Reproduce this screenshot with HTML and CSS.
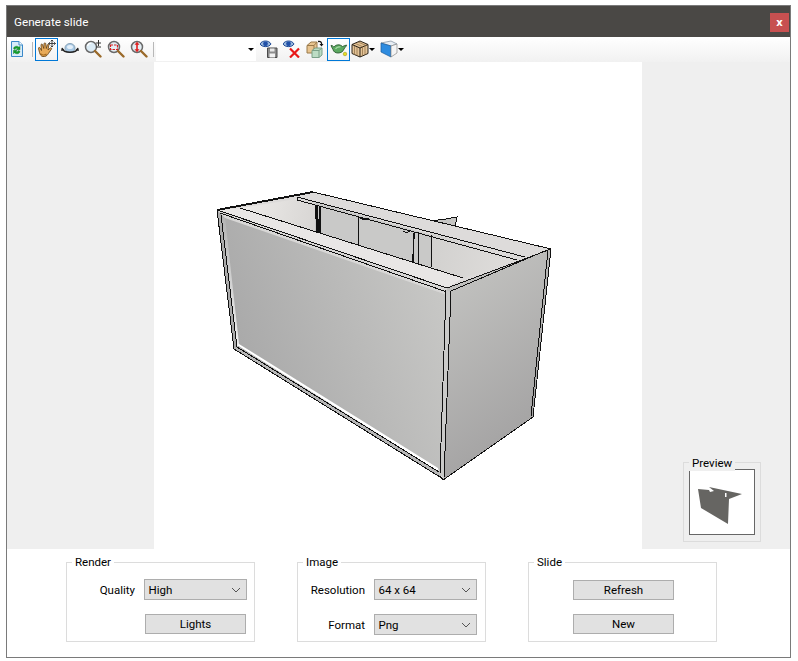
FILE: index.html
```html
<!DOCTYPE html>
<html lang="en">
<head>
<meta charset="utf-8">
<title>Generate slide</title>
<link rel="stylesheet" href="styles.css">
</head>
<body>
<div class="window">
  <header class="titlebar">
    <span class="title">Generate slide</span>
    <button class="close" type="button">x</button>
  </header>

  <div class="toolbar">
    <span class="tool first">
      <svg class="icon" viewBox="0 0 18 18"><path d="M3.500 1.500h7.500l3.500 3.500v11.500h-11z" fill="#d8ecfa" stroke="#3a88c8"/><path d="M11 1.500V5h3.500" fill="#fff" stroke="#3a88c8"/><path d="M5.500 8.500c.5-2.500 4-3 5.500-1.200l1-1v3.500H8.500l1-1c-1-.8-2.200-.5-2.500.7zM12 11.500c-.5 2.500-4 3-5.500 1.200l-1 1v-3.500H9l-1 1c1 .8 2.200.5 2.500-.7z" fill="#12a02c" stroke="#0a6a1a" stroke-width=".4"/></svg>
    </span>
    <span class="sep"></span>
    <span class="tool active">
      <svg class="icon" viewBox="0 0 18 18"><path d="M1.500 12.500 .5 8.500c-.3-1 1-1.500 1.500-.6L3.500 10.500 3 5c-.1-1.100 1.300-1.300 1.600-.2L5.800 8.500 6 3.800c0-1.200 1.700-1.200 1.800 0L8.300 8.500 9.300 5c.3-1 1.700-.8 1.500.3L10 10l2.200-2c.8-.7 1.900.3 1.200 1.200l-3 4.300c-.8 1.200-2 3-3.900 3H5C3.200 16.500 2 14.500 1.500 12.500z" fill="#e8aa58" stroke="#5a3a12" stroke-width=".8"/><path d="M2.500 13.500c1 1.800 4.500 2 6 .5" fill="none" stroke="#a86c20" stroke-width="1.200"/><path d="M14 0v7M10.500 3.500h7M14 0l-1.300 1.300M14 0l1.300 1.300M14 7l-1.300-1.300M14 7l1.300-1.300M10.500 3.500l1.300-1.300M10.500 3.500l1.300 1.300M17.500 3.500l-1.300-1.300M17.500 3.500l-1.300 1.300" fill="none" stroke="#333" stroke-width=".9"/></svg>
    </span>
    <span class="tool">
      <svg class="icon" viewBox="0 0 18 18"><ellipse cx="9" cy="8" rx="5" ry="4.500" fill="#a8c8e4" stroke="#8aa4b8"/><ellipse cx="9" cy="7" rx="3" ry="2" fill="#e4f0fa"/><path d="M1 8.500C3 13.500 15 13.500 17 8.500" fill="none" stroke="#222" stroke-width="1.600"/><path d="M0 11l1-3.500 2.500 2.500zM18 11l-1-3.500-2.500 2.500z" fill="#222"/></svg>
    </span>
    <span class="tool">
      <svg class="icon" viewBox="0 0 18 18"><circle cx="7" cy="7" r="5.500" fill="#dcecf6" stroke="#6a6a6a" stroke-width="1.500"/><path d="M3.500 6c.5-2 2-3 4-3" fill="none" stroke="#fff" stroke-width="1.200"/><path d="M11 11l5.500 5.500" stroke="#9a6a2a" stroke-width="2.400" stroke-linecap="round"/><path d="M14.500 0v6M12 3h5M12 7h5" stroke="#333" stroke-width="1" fill="none"/></svg>
    </span>
    <span class="tool">
      <svg class="icon" viewBox="0 0 18 18"><circle cx="7" cy="7" r="5.500" fill="#e4eef4" stroke="#6a6a6a" stroke-width="1.500"/><path d="M11 11l5.500 5.500" stroke="#9a6a2a" stroke-width="2.400" stroke-linecap="round"/><path d="M3.500 5h7v4.500h-7z" fill="none" stroke="#d82020" stroke-width="1.200" stroke-dasharray="2.500 1"/></svg>
    </span>
    <span class="tool">
      <svg class="icon" viewBox="0 0 18 18"><circle cx="7" cy="7" r="5.500" fill="#e4eef4" stroke="#6a6a6a" stroke-width="1.500"/><path d="M11 11l5.500 5.500" stroke="#9a6a2a" stroke-width="2.400" stroke-linecap="round"/><path d="M7 3v8" stroke="#e02020" stroke-width="1.600"/><path d="M4.500 4.800 7 1.800l2.500 3zM4.500 9.200 7 12.200l2.500-3z" fill="#e02020"/></svg>
    </span>
    <span class="sep"></span>
    <span class="combo"><span class="tri"></span></span>
    <span class="tool">
      <svg class="icon" viewBox="0 0 18 18"><path d="M0 4c2-4 9-4 11 0-2 3.500-9 3.500-11 0z" fill="#9ab8dc" stroke="#1e4a96"/><circle cx="5.500" cy="3.800" r="2.400" fill="#2050a8"/><path d="M7.500 8h9.500v9.500H7.500z" fill="#8c8c8c" stroke="#4a4a4a"/><path d="M10 8.500h4.500v3H10z" fill="#e8e8e8"/><path d="M9.500 13.500h5.500v4H9.500z" fill="#f2f2f2"/></svg>
    </span>
    <span class="tool">
      <svg class="icon" viewBox="0 0 18 18"><path d="M0 4c2-4 9-4 11 0-2 3.500-9 3.500-11 0z" fill="#9ab8dc" stroke="#1e4a96"/><circle cx="5.500" cy="3.800" r="2.400" fill="#2050a8"/><path d="M7 8.500l9 9M16 8.500l-9 9" stroke="#e81818" stroke-width="2.200"/></svg>
    </span>
    <span class="tool">
      <svg class="icon" viewBox="0 0 18 18"><path d="M1 5.500 5 2h6v8l-3 3H1z" fill="#e8c490" stroke="#9a7a4a"/><path d="M1 5.500h7V13M8 5.500 11 2" fill="none" stroke="#9a7a4a"/><path d="M6 10.500 9 8h7v7l-3 2.500H6z" fill="#bcdcc4" stroke="#7aa088"/><path d="M6 10.500h7v7M13 10.500 16 8" fill="none" stroke="#7aa088"/><path d="M12 1.500c2.500-.7 4 1 3.500 3" fill="none" stroke="#111" stroke-width="1.300"/><path d="M13.500 4h4l-2 2.500z" fill="#111"/></svg>
    </span>
    <span class="tool active teapot">
      <svg class="icon" viewBox="0 0 18 18"><path d="M1 5.500c1.500-.5 2 1 3 1.500C5.500 4.500 10 4 12.500 6.500L16.500 5c.5.800-1.800 2.500-2.500 4-.8 2.500-3 4-6 4-2.800 0-4.500-1.500-5-3.500C2.500 8 1.200 7 1 5.500z" fill="#5ca860" stroke="#2a5a30" stroke-width=".9"/><path d="M5.500 9c1-1.800 3-2.500 5-2" fill="none" stroke="#a8dca8" stroke-width="1.200"/><circle cx="15" cy="14" r="1.800" fill="#e8dc20" stroke="#8a8a10" stroke-width=".5"/></svg>
    </span>
    <span class="tool split">
      <svg class="icon" viewBox="0 0 18 18"><path d="M9 1 17 4.500v9L9 17 1 13.500v-9z" fill="#e4c498" stroke="#2a2218"/><path d="M1 4.500 9 8l8-3.500M9 8v9" fill="none" stroke="#2a2218"/><path d="M3.500 6v9M6 7v9M11.500 7v9M14 6v9M4 3.300l8 3.500M7 2l8 3.500" fill="none" stroke="#8a6a40" stroke-width=".7"/></svg>
      <span class="tri"></span>
    </span>
    <span class="tool split cube">
      <svg class="icon" viewBox="0 0 18 18"><path d="M1 3 11 1l6 3-6 2z" fill="#e8eef4" stroke="#7a8a98" stroke-width=".7"/><path d="M1 3l10 3v11L1 12z" fill="#2e8ce0" stroke="#1a5a9a" stroke-width=".7"/><path d="M11 6l6-2v9l-6 4z" fill="#f4f4f4" stroke="#888" stroke-width=".7"/></svg>
      <span class="tri"></span>
    </span>
  </div>

  <main class="canvas">
    <div class="stage">
      <svg class="model" viewBox="154 62 488 487">
        <defs>
          <linearGradient id="faceFront" gradientUnits="userSpaceOnUse" x1="240" y1="340" x2="440" y2="270">
            <stop offset="0" stop-color="#aaaaaa"/>
            <stop offset="1" stop-color="#c8c8c6"/>
          </linearGradient>
          <linearGradient id="faceSide" gradientUnits="userSpaceOnUse" x1="450" y1="290" x2="540" y2="410">
            <stop offset="0" stop-color="#c0c0be"/>
            <stop offset="1" stop-color="#a6a5a5"/>
          </linearGradient>
          <linearGradient id="wallLeft" gradientUnits="userSpaceOnUse" x1="240" y1="205" x2="315" y2="220">
            <stop offset="0" stop-color="#eeecea"/>
            <stop offset="1" stop-color="#d8d6d4"/>
          </linearGradient>
          <linearGradient id="wallRight" gradientUnits="userSpaceOnUse" x1="431" y1="250" x2="520" y2="265">
            <stop offset="0" stop-color="#d2d1cf"/>
            <stop offset="1" stop-color="#e0dedc"/>
          </linearGradient>
          <linearGradient id="leftSliver" gradientUnits="userSpaceOnUse" x1="225" y1="217" x2="237" y2="345">
            <stop offset="0" stop-color="#b4b4b4"/>
            <stop offset="1" stop-color="#eeeeee"/>
          </linearGradient>
        </defs>

        <path class="handle" d="M430 221 457 217 455 228 436 228z"/>
        <path class="ln" d="M430 221 446 219 457 217 455 228"/>

        <path class="top" d="M217 210 313 192 551 249 447 288z"/>
        <path class="panel" d="M315 202 431 235 431 270 315 233z"/>
        <path class="wall-l" d="M240 208 297 199 315 203 315 232z"/>
        <path class="wall-r" d="M431 232 517 260 463 278 431 268z"/>
        <path class="rail-back" d="M297 197 313 192 551 249 523 258z"/>
        <path class="rail-front" d="M217 210 240 208 463 278 447 288z"/>

        <path class="ln" d="M297 197 525 257"/>
        <path class="ln" d="M297 197 297 200 517 260"/>
        <path class="ln" d="M240 208 463 278"/>
        <path class="ln" d="M313 192 551 249"/>
        <path class="ln" d="M358 217 358 245"/>
        <path class="ln" d="M431 235 431 267"/>
        <path class="ln" d="M418 232 418 264"/>
        <path class="ln" d="M360 218 365 220 369 218M403 231 407 233 411 230"/>
        <path class="ln-fat" d="M316 205 318 233"/>
        <path class="ln-med" d="M320 206 320 233"/>
        <path class="ln-med" d="M414 233 413 262"/>
        <path class="ln-heavy" d="M217 210 313 192"/>

        <path class="face-front" d="M217 210 447 288 441 478 234 349z"/>
        <path class="sliver" d="M225 217 239 344 237 347 221 215z" fill="url(#leftSliver)"/>
        <path class="white" d="M237 345 239 344 438 468 439 472z"/>
        <path class="strip-low" d="M234 349 237 347 439 472 440 477z"/>
        <path class="rail-lip" d="M217 210 447 288 447 295 225 218z"/>
        <path class="ln" d="M220 213 447 292"/>
        <path class="ln" d="M217 210 447 288"/>
        <path class="ln" d="M217 210 234 349"/>
        <path class="ln" d="M221 215 237 347"/>
        <path class="ln" d="M234 349 440 477"/>
        <path class="ln" d="M237 347 439 472"/>

        <path class="face-side" d="M447 288 551 249 533 417 443 480z"/>
        <path class="post" d="M446 290 451 292 444 480 440 474z"/>
        <path class="ln" d="M447 288 551 249"/>
        <path class="ln" d="M451 291 547 250"/>
        <path class="ln" d="M446 290 440 474"/>
        <path class="ln" d="M451 291 444 478"/>
        <path class="ln" d="M551 249 533 417"/>
        <path class="ln" d="M548 250 531 416"/>
        <path class="ln" d="M533 417 443 480 440 476"/>
      </svg>
    </div>

    <aside class="preview">
      <span class="preview-legend">Preview</span>
      <div class="preview-frame">
        <svg class="preview-img" viewBox="690 470 64 64"><path class="preview-shape" d="M698 489 709 490 710 492 714 491 709 487 742 494 729 499 728 524 701 508z"/><path class="preview-gap" d="M725 493h1.500v4H725z"/></svg>
      </div>
    </aside>
  </main>

  <section class="panel-row">
    <fieldset class="group">
      <legend>Render</legend>
      <div class="form-grid">
        <label class="lbl">Quality</label>
        <div class="select"><span>High</span><svg class="chev" viewBox="0 0 10 6"><path d="M1 1l4 4 4-4"/></svg></div>
        <span></span>
        <button class="btn" type="button">Lights</button>
      </div>
    </fieldset>
    <fieldset class="group">
      <legend>Image</legend>
      <div class="form-grid tight">
        <label class="lbl">Resolution</label>
        <div class="select"><span>64 x 64</span><svg class="chev" viewBox="0 0 10 6"><path d="M1 1l4 4 4-4"/></svg></div>
        <label class="lbl">Format</label>
        <div class="select"><span>Png</span><svg class="chev" viewBox="0 0 10 6"><path d="M1 1l4 4 4-4"/></svg></div>
      </div>
    </fieldset>
    <fieldset class="group">
      <legend>Slide</legend>
      <div class="slide-col">
        <button class="btn" type="button">Refresh</button>
        <button class="btn" type="button">New</button>
      </div>
    </fieldset>
  </section>
</div>
</body>
</html>
```

FILE: styles.css
```css
* { box-sizing: border-box; }

html, body { margin: 0; padding: 0; background: #fff; }

body {
  font-family: Roboto, "Liberation Sans", sans-serif;
  font-size: 11.5px;
  color: #000;
}

.window {
  width: 785px;
  height: 653px;
  margin: 5px 0 0 6px;
  border: 1px solid #7a7a7a;
  background: #fff;
  display: flex;
  flex-direction: column;
}

.titlebar {
  height: 31px;
  flex: none;
  background: #4a4845;
  color: #fff;
  display: flex;
  align-items: center;
  justify-content: space-between;
  padding: 0 0 0 7px;
}

.title { font-size: 11.7px; line-height: 16px; }

.close {
  width: 19px;
  height: 19px;
  margin: 2px 1px 0 0;
  padding: 0;
  border: 0;
  background: #c75050;
  color: #fff;
  font: 700 10px/18px "DejaVu Sans", sans-serif;
}

.toolbar {
  height: 25px;
  flex: none;
  display: flex;
  align-items: center;
  background: linear-gradient(#ffffff, #f1f1f1);
  padding: 0 0 1px;
}

.tool {
  width: 23px;
  height: 23px;
  flex: none;
  display: flex;
  align-items: center;
  justify-content: center;
  border: 1px solid transparent;
}

.tool.first { width: 19px; }

.tool.active { border-color: #0078d7; }

.tool.teapot { margin-left: 1px; }

.tool.split { width: 26px; justify-content: flex-start; padding-left: 0; }
.tool.split.cube { margin-left: 3px; }

.icon { width: 18px; height: 18px; flex: none; display: block; }

.sep {
  width: 1px;
  height: 15px;
  flex: none;
  background: #b8b8b8;
  margin: 0 2px 0 3px;
}

.tool.first + .sep { margin-left: 6px; }

.combo {
  width: 100px;
  height: 24px;
  flex: none;
  background: #fff;
  display: flex;
  align-items: center;
  justify-content: flex-end;
  padding-right: 2px;
  margin-right: 1px;
}

.tri {
  width: 0;
  height: 0;
  flex: none;
  border-left: 3px solid transparent;
  border-right: 3px solid transparent;
  border-top: 3px solid #000;
}

.canvas {
  position: relative;
  height: 487px;
  flex: none;
  background: #efefef;
  padding-left: 147px;
}

.stage { width: 488px; height: 487px; background: #fff; }

.model { display: block; width: 488px; height: 487px; }

.ln, .ln-med, .ln-fat, .ln-heavy { fill: none; stroke: #111; stroke-width: 1; shape-rendering: crispEdges; }
.ln-med { stroke-width: 1.500; }
.ln-fat { stroke-width: 3; }
.ln-heavy { stroke-width: 2; }

.top { fill: #dcdad9; }
.panel { fill: #c9c9c8; }
.handle { fill: #c6c6c4; }
.wall-l { fill: url(#wallLeft); }
.wall-r { fill: url(#wallRight); }
.rail-back { fill: #dddbda; }
.rail-front { fill: #e8e6e5; }
.face-front { fill: url(#faceFront); }
.face-side { fill: url(#faceSide); }
.white { fill: #fff; }
.strip-low { fill: #b8b8b8; }
.rail-lip { fill: #d8d7d6; }
.post { fill: #cacac9; }

.preview {
  position: absolute;
  left: 676px;
  top: 400px;
  width: 78px;
  height: 80px;
  border: 1px solid #dcdcdc;
}

.preview-legend {
  position: absolute;
  left: 5px;
  top: -8px;
  padding: 0 3px;
  background: #efefef;
  line-height: 16px;
}

.preview-frame {
  width: 66px;
  height: 66px;
  margin: 6px 0 0 5px;
  background: #fff;
  border: 1px solid #666;
}

.preview-img { display: block; width: 64px; height: 64px; }
.preview-shape { fill: #666562; }
.preview-gap { fill: #fff; }

.panel-row {
  flex: 1;
  display: flex;
  gap: 42px;
  padding: 5px 0 0 59px;
  align-items: flex-start;
}

.group {
  width: 189px;
  height: 88px;
  margin: 0;
  padding: 0;
  border: 1px solid #dcdcdc;
  min-width: 0;
}

.group legend {
  padding: 0 3px;
  margin-left: 5px;
  line-height: 16px;
}

.form-grid {
  display: grid;
  grid-template-columns: 68px 103px;
  column-gap: 9px;
  row-gap: 14px;
  align-items: center;
  padding-top: 9px;
}

.form-grid.tight { grid-template-columns: 67px 103px; }

.lbl { text-align: right; }

.select {
  height: 21px;
  background: #e1e1e1;
  border: 1px solid #adadad;
  display: flex;
  align-items: center;
  justify-content: space-between;
  padding: 0 5px 0 3.500px;
}

.chev { width: 10px; height: 6px; display: block; }
.chev path { fill: none; stroke: #555; stroke-width: 1; }

.btn {
  height: 20px;
  width: 101px;
  justify-self: center;
  padding: 0;
  background: #e1e1e1;
  border: 1px solid #adadad;
  font: inherit;
  color: #000;
}

.slide-col {
  display: flex;
  flex-direction: column;
  gap: 14px;
  padding: 10px 0 0 44px;
}
```
